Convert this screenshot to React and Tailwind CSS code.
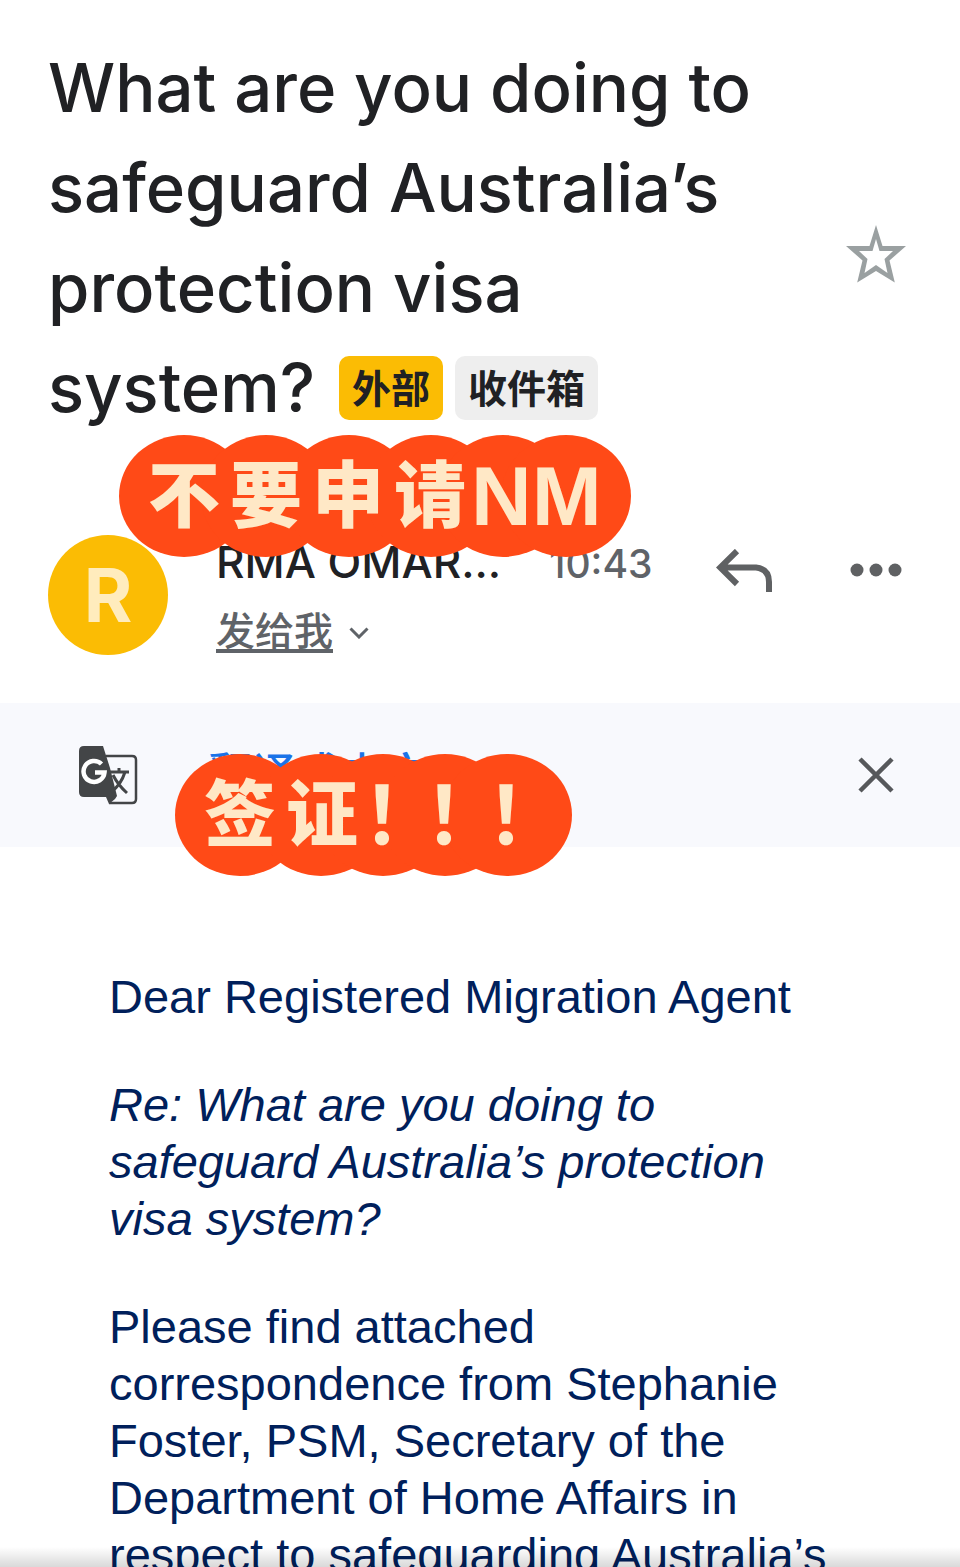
function Sticker({ className, width, centers, children }) {
  return (
    <div className={"absolute h-[122px] " + className}>
      <svg className="absolute inset-0" width={width} height="122" aria-hidden="true">
        {centers.map((cx) => (
          <ellipse key={cx} cx={cx} cy="61" rx="65" ry="61" fill="#ff4a17" />
        ))}
      </svg>
      <div className="relative flex h-full items-center text-[#ffe8c6]">{children}</div>
    </div>
  );
}

function Glyph({ children }) {
  return (
    <span className="flex w-[82px] justify-center pb-3 font-['Noto_Sans_CJK_SC',sans-serif] text-[72px] leading-none font-black">
      {children}
    </span>
  );
}

function Bang() {
  return (
    <span className="flex w-[62px] justify-center pb-3 font-['Noto_Sans_CJK_JP',sans-serif] text-[80px] leading-none font-bold">
      ！
    </span>
  );
}

function Subject() {
  return (
    <header className="flex shrink-0 items-center pt-[38px] pr-[54px] pl-12">
      <h1 className="flex-1 pr-16 font-['Inter',sans-serif] text-[67px] leading-[100px] font-medium text-[#202124]">
        What are you doing to safeguard Australia’s protection visa system?
        <span className="ml-6 inline-flex gap-3 align-[9px] font-['Noto_Sans_CJK_SC',sans-serif] text-[39px] leading-[60px] font-bold">
          <span className="rounded-[10px] bg-[#fbbc04] px-[13px] pb-1">外部</span>
          <span className="rounded-[10px] bg-[#eeeeee] px-[13px] pb-1">收件箱</span>
        </span>
      </h1>
      <button aria-label="Star" className="mt-8 shrink-0">
        <svg width="60" height="58" viewBox="0 0 60 58" className="block">
          <path
            fill="#9aa0a1"
            fillRule="evenodd"
            d="M30 0 36.500 21H60L43.500 35.500 48.800 57.500 30 46 11.200 57.500 16.500 35.500 0 21H23.500ZM30 14 26.500 26H13L21.500 34 18.500 48 30 40 41.500 48 38.500 34 47 26H33.500Z"
          />
        </svg>
      </button>
    </header>
  );
}

function Sender() {
  return (
    <section className="relative flex shrink-0 items-start px-12 pt-[97px] pb-12">
      <div className="flex size-[120px] shrink-0 items-center justify-center rounded-full bg-[#fbbc04] font-['Inter',sans-serif] text-[74px] leading-none font-bold text-[#ffecbd]">
        R
      </div>
      <div className="ml-12 flex-1 font-['Inter','Noto_Sans_CJK_SC',sans-serif]">
        <div className="flex items-baseline gap-12 leading-[54px]">
          <span className="text-[44px] font-medium text-[#202124]">RMA OMAR...</span>
          <time className="text-[39px] font-medium text-[#5f6368]">10:43</time>
        </div>
        <button className="mt-[22px] flex items-center gap-4 text-[#5f6368]">
          <span className="border-b-4 border-[#5f6368] text-[39px] leading-[36px] font-medium">发给我</span>
          <svg width="20" height="12" viewBox="0 0 20 12" fill="none" stroke="currentColor" strokeWidth="3">
            <path d="M1.500 1.500 10 10 18.500 1.500" />
          </svg>
        </button>
      </div>
      <button aria-label="Reply" className="mt-[14px] shrink-0">
        <svg width="56" height="44" viewBox="0 0 56 44" fill="none" stroke="#5f6163" strokeWidth="6" className="block">
          <path d="M21 2 4.200 18.500 21 35M4.500 18.500H40Q53 20 53 33V43" />
        </svg>
      </button>
      <button aria-label="More" className="mt-[28px] mr-[10px] ml-[78px] shrink-0">
        <svg width="52" height="14" viewBox="0 0 52 14" fill="#5f6163" className="block">
          <circle cx="7" cy="7" r="6.500" />
          <circle cx="26" cy="7" r="6.500" />
          <circle cx="45" cy="7" r="6.500" />
        </svg>
      </button>
      <Sticker
        className="top-[-3px] left-[119px] w-[512px]"
        width={512}
        centers={[65, 147, 230, 312, 384, 447]}
      >
        <span className="w-6" />
        <Glyph>不</Glyph>
        <Glyph>要</Glyph>
        <Glyph>申</Glyph>
        <Glyph>请</Glyph>
        <span className="font-['Liberation_Sans_Narrow','Liberation_Sans',sans-serif] text-[84px] leading-none font-bold">
          NM
        </span>
      </Sticker>
    </section>
  );
}

function TranslateBar() {
  return (
    <section className="relative flex h-36 shrink-0 items-center bg-[#f8f9fd] pr-[66px] pl-[79px]">
      <svg width="59" height="59" viewBox="0 0 59 59" className="shrink-0" aria-hidden="true">
        <path d="M27 10H53Q57 10 57 14V53Q57 57 53 57H30" fill="#f8f9fd" stroke="#434547" strokeWidth="2.500" />
        <path d="M5 0H24L31 22 38 50 36 53 30 58 27 51H5Q0 51 0 46V5Q0 0 5 0Z" fill="#434547" />
        <path d="M30 26H50M40 22V26M46 26Q42 39 32 46M34 29Q39 39 48 47" fill="none" stroke="#434547" strokeWidth="3" />
        <path d="M22.500 18A10.500 10.500 0 1 0 25.500 26.500H16" fill="none" stroke="#fff" strokeWidth="4.500" />
      </svg>
      <a
        href="#translate"
        className="ml-[70px] flex-1 pb-2 font-['Noto_Sans_CJK_SC',sans-serif] text-[44px] leading-[56px] font-medium text-[#1a73e8]"
      >
        翻译成中文
      </a>
      <button aria-label="Close" className="shrink-0">
        <svg width="36" height="36" viewBox="0 0 36 36" fill="none" stroke="#56585b" strokeWidth="4.500" className="block">
          <path d="M2 2 34 34M34 2 2 34" />
        </svg>
      </button>
      <Sticker className="top-[51px] left-[175px] w-[397px]" width={397} centers={[65, 146, 208, 270, 332]}>
        <span className="w-6" />
        <Glyph>签</Glyph>
        <Glyph>证</Glyph>
        <span className="-ml-3 flex">
          <Bang />
          <Bang />
          <Bang />
        </span>
      </Sticker>
    </section>
  );
}

export default function App() {
  return (
    <main className="relative flex h-screen flex-col overflow-hidden bg-white">
      <Subject />
      <Sender />
      <TranslateBar />
      <article className="flex flex-col gap-[51px] px-[109px] pt-[121px] font-['Liberation_Sans',sans-serif] text-[47px] leading-[57px] text-[#00205b]">
        <p>Dear Registered Migration Agent</p>
        <p className="italic">Re: What are you doing to safeguard Australia’s protection visa system?</p>
        <p>
          Please find attached correspondence from Stephanie Foster, PSM, Secretary of the Department of Home Affairs in
          respect to safeguarding Australia’s
        </p>
      </article>
      <div className="absolute inset-x-0 bottom-0 h-5 bg-linear-to-t from-black/15 to-transparent" />
    </main>
  );
}
